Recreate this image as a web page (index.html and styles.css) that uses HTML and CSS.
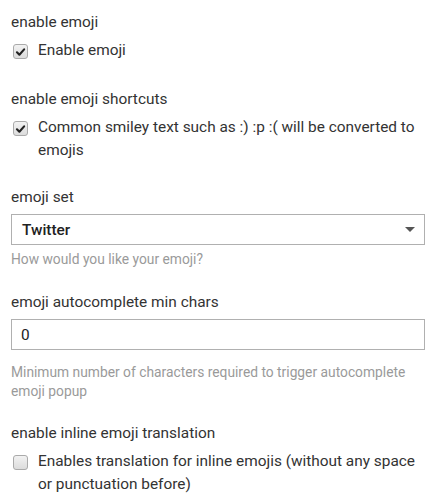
FILE: index.html
```html
<!DOCTYPE html>
<html>
<head>
<meta charset="utf-8">
<link rel="stylesheet" href="styles.css">
</head>
<body>
<div class="settings">
  <div class="setting setting-check">
    <div class="label">enable emoji</div>
    <div class="check-row">
      <span class="box checked"><svg viewBox="0 0 14 14" width="14" height="14"><path d="M3.2 7.3 L5.8 9.9 L10.9 4.2" fill="none" stroke="#222" stroke-width="2.3" stroke-linecap="round" stroke-linejoin="round"/></svg></span>
      <span class="check-text">Enable emoji</span>
    </div>
  </div>
  <div class="setting setting-check2">
    <div class="label">enable emoji shortcuts</div>
    <div class="check-row">
      <span class="box checked"><svg viewBox="0 0 14 14" width="14" height="14"><path d="M3.2 7.3 L5.8 9.9 L10.9 4.2" fill="none" stroke="#222" stroke-width="2.3" stroke-linecap="round" stroke-linejoin="round"/></svg></span>
      <span class="check-text">Common smiley text such as :) :p :( will be converted to emojis</span>
    </div>
  </div>
  <div class="setting">
    <div class="label">emoji set</div>
    <div class="select">
      <span class="select-value">Twitter</span>
      <svg class="caret" viewBox="0 0 10 5" width="10" height="5"><path d="M0 0 H10 L5 5 Z" fill="#555"/></svg>
    </div>
    <div class="help help-tight">How would you like your emoji?</div>
  </div>
  <div class="setting setting-input">
    <div class="label">emoji autocomplete min chars</div>
    <div class="input">0</div>
    <div class="help">Minimum number of characters required to trigger autocomplete emoji popup</div>
  </div>
  <div class="setting">
    <div class="label">enable inline emoji translation</div>
    <div class="check-row">
      <span class="box"></span>
      <span class="check-text">Enables translation for inline emojis (without any space or punctuation before)</span>
    </div>
  </div>
</div>
</body>
</html>
```
FILE: styles.css
```css
html, body {
  margin: 0;
  padding: 0;
  background: #fff;
}
body {
  font-family: Roboto, "Noto Sans", sans-serif;
  color: #333;
  font-size: 15.4px;
}
.settings {
  padding: 11px 11px 0 11px;
  display: flex;
  flex-direction: column;
  gap: 22px;
}
.setting {
  display: flex;
  flex-direction: column;
}
.setting-check {
  margin-bottom: 4px;
}
.setting-check2 {
  margin-bottom: 2px;
}
.setting-input {
  margin-bottom: -1px;
}
.label {
  line-height: 22px;
  margin-bottom: 6px;
}
.check-row {
  display: flex;
  align-items: flex-start;
  gap: 10px;
  padding-left: 2px;
}
.box {
  flex: none;
  width: 13px;
  height: 13px;
  margin-top: 5px;
  border: 1px solid #aaa;
  border-radius: 3px;
  background: linear-gradient(#f2f2f2, #dcdcdc);
  display: flex;
  align-items: center;
  justify-content: center;
}
.box svg {
  display: block;
}
.check-text {
  line-height: 23px;
}
.select, .input {
  box-sizing: border-box;
  width: 414px;
  height: 31px;
  border: 1px solid #b0b0b0;
  display: flex;
  align-items: center;
  padding: 0 9px 0 10px;
}
.select {
  justify-content: space-between;
}
.select-value {
  font-weight: 500;
  color: #222;
}
.input {
  color: #222;
  padding-left: 9px;
}
.help {
  color: #9a9a9a;
  font-size: 13.8px;
  line-height: 19px;
  margin-top: 13px;
}
.help-tight {
  margin-top: 5px;
}
```
